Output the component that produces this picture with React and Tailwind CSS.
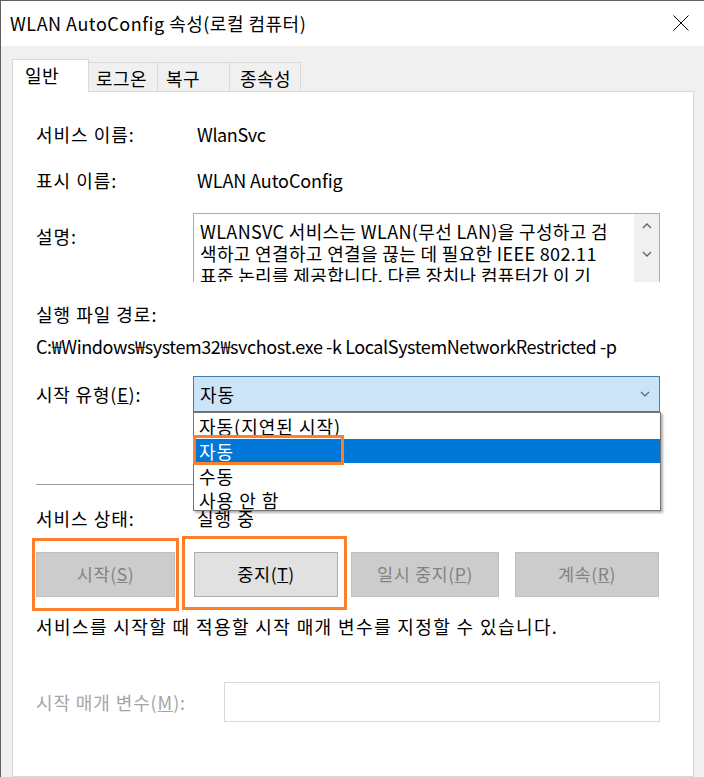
import React from 'react'

const FONT = { fontFamily: '"Noto Sans CJK KR", "Noto Sans", sans-serif' }

const Row = ({ label, children, className = '' }) => (
    <div className={`flex items-center h-[24px] leading-[24px] ${className}`}>
        <div className="w-[159px] shrink-0 tracking-[1px]">{label}</div>
        <div>{children}</div>
    </div>
)

const Btn = ({ children, disabled, className = '' }) => (
    <div
        className={`h-[45px] flex items-center justify-center border text-[17.5px] tracking-[0.6px] ${disabled ? 'bg-[#cccccc] border-[#bfbfbf] text-[#838383]' : 'bg-[#e1e1e1] border-[#adadad] text-black'} ${className}`}
    >
        {children}
    </div>
)

const App = () => {
    const options = ['자동(지연된 시작)', '자동', '수동', '사용 안 함']

    return (
        <div style={FONT} className="relative w-[704px] h-[777px] overflow-hidden bg-[#f0f0f0] border-t border-l border-[#5f5f5f] flex flex-col text-[#000]">
            {/* title bar */}
            <div className="h-[45px] bg-white flex items-center justify-between pl-[9px] pr-[15px] shrink-0">
                <span className="text-[18px] tracking-[0.5px]">WLAN AutoConfig 속성(로컬 컴퓨터)</span>
                <svg width="16" height="16" viewBox="0 0 16 16" className="mt-[-2px]">
                    <path d="M0.5 0.5 L15.5 15.5 M15.5 0.5 L0.5 15.5" stroke="#000" strokeWidth="1" fill="none" />
                </svg>
            </div>

            {/* tabs */}
            <div className="flex items-end pl-[11px] pt-[13px] shrink-0 relative z-10 text-[18px] tracking-[0.5px]">
                <div className="w-[77px] h-[33px] bg-white border border-b-0 border-[#d9d9d9] pl-[12px] leading-[30px]">일반</div>
                <div className="w-[69px] h-[30px] border border-l-0 border-b-0 border-[#d9d9d9] pl-[7px] leading-[30px]">로그온</div>
                <div className="w-[72px] h-[30px] border border-l-0 border-b-0 border-[#d9d9d9] pl-[8px] leading-[30px]">복구</div>
                <div className="w-[71px] h-[30px] border border-l-0 border-b-0 border-[#d9d9d9] pl-[10px] leading-[30px]">종속성</div>
            </div>

            {/* panel */}
            <div className="relative ml-[11px] w-[682px] flex-1 bg-white border border-[#d9d9d9] -mt-px pl-[23px] text-[18px]">
                <Row label="서비스 이름:" className="mt-[30px]"><span className="pl-[2px] tracking-[-0.4px]">WlanSvc</span></Row>
                <Row label="표시 이름:" className="mt-[22px]"><span className="pl-[2px] tracking-[-0.1px]">WLAN AutoConfig</span></Row>

                <div className="flex mt-[21px]">
                    <div className="w-[157px] shrink-0 pt-[11px] leading-[24px] tracking-[1px]">설명:</div>
                    <div className="w-[467px] h-[69px] border border-[#adadad] border-b-0 flex overflow-hidden">
                        <div className="flex-1 pl-[6px] pt-[6px] leading-[22px] whitespace-nowrap overflow-hidden tracking-[0.35px]">
                            <div>WLANSVC 서비스는 WLAN(무선 LAN)을 구성하고 검</div>
                            <div>색하고 연결하고 연결을 끊는 데 필요한 IEEE 802.11</div>
                            <div>표준 논리를 제공합니다. 다른 장치나 컴퓨터가 이 기</div>
                        </div>
                        <div className="w-[25px] shrink-0 bg-[#f0f0f0] flex flex-col items-center pt-[9px] gap-[22px]">
                            <svg width="10" height="6" viewBox="0 0 10 6"><path d="M1 5 L5 1 L9 5" stroke="#606060" strokeWidth="1.3" fill="none" /></svg>
                            <svg width="10" height="6" viewBox="0 0 10 6"><path d="M1 1 L5 5 L9 1" stroke="#606060" strokeWidth="1.3" fill="none" /></svg>
                        </div>
                    </div>
                </div>

                <div className="h-[24px] leading-[24px] mt-[20px] tracking-[1px]">실행 파일 경로:</div>
                <div className="h-[24px] leading-[24px] mt-[8px] tracking-[-0.4px] whitespace-nowrap">C:₩Windows₩system32₩svchost.exe -k LocalSystemNetworkRestricted -p</div>

                <div className="flex items-center mt-[18px] h-[36px]">
                    <div className="w-[157px] shrink-0 tracking-[0.8px]">시작 유형(<span className="underline">E</span>):</div>
                    <div className="w-[467px] h-[36px] bg-[#cce4f7] border border-[#3c7fb1] flex items-center justify-between pl-[6px] pr-[9px] tracking-[1px]">
                        <span>자동</span>
                        <svg width="10" height="6" viewBox="0 0 10 6"><path d="M1 1 L5 5 L9 1" stroke="#606060" strokeWidth="1.2" fill="none" /></svg>
                    </div>
                </div>

                <div className="mt-[72px] h-px w-[624px] bg-[#a0a0a0]" />

                <Row label="서비스 상태:" className="mt-[21px]"><span className="pl-[2px] tracking-[1px]">실행 중</span></Row>

                <div className="relative flex mt-[22px]">
                    <Btn disabled className="w-[139px]">시작(<span className="underline">S</span>)</Btn>
                    <Btn className="w-[144px] ml-[19px]">중지(<span className="underline">T</span>)</Btn>
                    <Btn disabled className="w-[148px] ml-[13px]">일시 중지(<span className="underline">P</span>)</Btn>
                    <Btn disabled className="w-[144px] ml-[16px]">계속(<span className="underline">R</span>)</Btn>
                    <div className="absolute left-[-4px] top-[-14px] w-[147px] h-[73px] border-[3px] border-[#fd7f2c]" />
                    <div className="absolute left-[146px] top-[-16px] w-[165px] h-[74px] border-[3px] border-[#fd7f2c]" />
                </div>

                <div className="h-[24px] leading-[24px] mt-[17px] tracking-[1.4px] whitespace-nowrap">서비스를 시작할 때 적용할 시작 매개 변수를 지정할 수 있습니다.</div>

                <div className="flex items-center mt-[44px]">
                    <div className="w-[188px] shrink-0 text-[#a6a6a6] tracking-[0.9px] whitespace-nowrap">시작 매개 변수(<span className="underline">M</span>):</div>
                    <div className="w-[436px] h-[40px] border border-[#d9d9d9] bg-white" />
                </div>

                {/* open combo list */}
                <div className="absolute left-[180px] top-[320px] w-[468px] h-[99px] bg-white border border-[#767676] shadow-[2px_2px_2px_rgba(0,0,0,0.3)] z-20 pt-[1px] tracking-[1px]">
                    {options.map((o, i) => (
                        <div
                            key={o}
                            className={`h-[24px] leading-[24px] pl-[5px] ${i === 1 ? 'bg-[#0078d7] text-white mt-[1px] mb-[1px]' : ''}`}
                        >
                            {o}
                        </div>
                    ))}
                    <div className="absolute left-[-1px] top-[22px] w-[151px] h-[30px] border-[3px] border-[#fd7f2c]" />
                </div>
            </div>
        </div>
    )
}

export default App
